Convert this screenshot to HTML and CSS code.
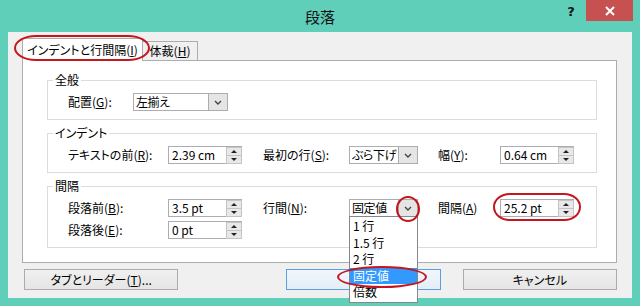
FILE: index.html
```html
<!DOCTYPE html>
<html lang="ja">
<head>
    <meta charset="UTF-8">
    <title>段落</title>
    <link rel="stylesheet" href="styles.css">
</head>
<body>
    <div class="window">
        <div class="titlebar">
            <span class="title">段落</span>
            <div class="controls">
                <span class="help">?</span>
                <span class="close">
                    <svg width="10" height="10" viewBox="0 0 10 10"><path d="M1 1 L9 9 M9 1 L1 9" stroke="#fff" stroke-width="2" fill="none"/></svg>
                </span>
            </div>
        </div>

        <div class="client">
            <div class="tabs">
                <div class="tab active">インデントと行間隔(<u>I</u>)<span class="mark mark-tab"></span></div>
                <div class="tab">体裁(<u>H</u>)</div>
            </div>

            <div class="panel">
                <fieldset class="group">
                    <legend>全般</legend>
                    <div class="row-general">
                        <span class="label-short">配置(<u>G</u>):</span>
                        <div class="combo combo-wide">
                            <span class="value">左揃え</span>
                            <span class="drop"><svg width="8" height="5" viewBox="0 0 8 5"><path d="M1 1 L4 4 L7 1" stroke="#444" stroke-width="1.4" fill="none"/></svg></span>
                        </div>
                    </div>
                </fieldset>

                <fieldset class="group">
                    <legend>インデント</legend>
                    <div class="grid">
                        <span class="label">テキストの前(<u>R</u>):</span>
                        <div class="cell">
                            <div class="spin"><span class="value">2.39 cm</span><span class="spin-btn"><i class="up"></i><i class="down"></i></span></div>
                        </div>
                        <span class="label">最初の行(<u>S</u>):</span>
                        <div class="cell">
                            <div class="combo">
                                <span class="value">ぶら下げ</span>
                                <span class="drop"><svg width="8" height="5" viewBox="0 0 8 5"><path d="M1 1 L4 4 L7 1" stroke="#444" stroke-width="1.4" fill="none"/></svg></span>
                            </div>
                        </div>
                        <span class="label">幅(<u>Y</u>):</span>
                        <div class="cell">
                            <div class="spin"><span class="value">0.64 cm</span><span class="spin-btn"><i class="up"></i><i class="down"></i></span></div>
                        </div>
                    </div>
                </fieldset>

                <fieldset class="group">
                    <legend>間隔</legend>
                    <div class="grid">
                        <span class="label">段落前(<u>B</u>):</span>
                        <div class="cell">
                            <div class="spin"><span class="value">3.5 pt</span><span class="spin-btn"><i class="up"></i><i class="down"></i></span></div>
                        </div>
                        <span class="label">行間(<u>N</u>):</span>
                        <div class="cell">
                            <div class="combo combo-open">
                                <span class="value">固定値</span>
                                <span class="drop"><svg width="8" height="5" viewBox="0 0 8 5"><path d="M1 1 L4 4 L7 1" stroke="#444" stroke-width="1.4" fill="none"/></svg><span class="mark mark-drop"></span></span>
                                <ul class="list">
                                    <li>1 行</li>
                                    <li>1.5 行</li>
                                    <li>2 行</li>
                                    <li class="selected">固定値<span class="mark mark-item"></span></li>
                                    <li>倍数</li>
                                </ul>
                            </div>
                        </div>
                        <span class="label">間隔(<u>A</u>)</span>
                        <div class="cell">
                            <div class="spin"><span class="value">25.2 pt</span><span class="spin-btn"><i class="up"></i><i class="down"></i></span><span class="mark mark-spin"></span></div>
                        </div>

                        <span class="label">段落後(<u>E</u>):</span>
                        <div class="cell">
                            <div class="spin"><span class="value">0 pt</span><span class="spin-btn"><i class="up"></i><i class="down"></i></span></div>
                        </div>
                    </div>
                </fieldset>
            </div>

            <div class="buttons">
                <button class="btn">タブとリーダー(<u>T</u>)...</button>
                <!-- OK button: its caption is hidden under the open list -->
                <button class="btn default"></button>
                <button class="btn">キャンセル</button>
            </div>
        </div>
    </div>
</body>
</html>
```

FILE: styles.css
```css
* {
    margin: 0;
    padding: 0;
    box-sizing: border-box;
}

body {
    background: #fff;
    font-family: "Noto Sans CJK JP", "Noto Sans", sans-serif;
    font-size: 12px;
    line-height: 16px;
    color: #000;
    font-feature-settings: "palt";
}

u {
    text-decoration: underline;
    text-underline-offset: 1px;
}

.window {
    width: 640px;
    height: 306px;
    background: #60cfba;
    display: flex;
    flex-direction: column;
    padding: 0 8px 8px;
}

/* title bar */
.titlebar {
    height: 32px;
    display: grid;
    grid-template-columns: 1fr auto 1fr;
}

.title {
    grid-column: 2;
    font-size: 15px;
    line-height: 34px;
    color: #111;
}

.controls {
    justify-self: end;
    align-self: start;
    display: flex;
    margin-right: -1px;
}

.help {
    width: 22px;
    height: 21px;
    margin-right: 4px;
    text-align: center;
    font-family: "DejaVu Sans", sans-serif;
    font-weight: bold;
    font-size: 13px;
    line-height: 24px;
    color: #111;
}

.close {
    width: 47px;
    height: 21px;
    background: #c75050;
    display: flex;
    align-items: center;
    justify-content: center;
}

/* client area */
.client {
    flex: 1;
    background: #f0f0f0;
    display: flex;
    flex-direction: column;
    padding: 6px 15px 8px 14px;
}

.tabs {
    display: flex;
    align-items: flex-end;
    height: 22px;
}

.tab {
    height: 19px;
    padding: 1px 0 0;
    text-align: center;
    width: 55px;
    border: 1px solid #adadad;
    border-left: none;
    border-bottom: none;
    background: #f0f0f0;
}

.tab.active {
    width: 121px;
    height: 23px;
    padding-top: 3px;
    margin-bottom: -1px;
    border-left: 1px solid #adadad;
    background: #fff;
    position: relative;
    z-index: 1;
}

.panel {
    flex: 1;
    background: #fff;
    border: 1px solid #adadad;
    padding: 11px 19px 14px 24px;
}

.group {
    border: 1px solid #dcdcdc;
    padding: 5px 0 8px 20px;
    min-width: 0;
}

.group + .group {
    margin-top: 5px;
}

.group legend {
    margin-left: -15px;
    padding: 0 2px;
    line-height: 16px;
}

.row-general {
    display: flex;
    align-items: center;
}

.label-short {
    width: 65px;
}

.grid {
    display: grid;
    grid-template-columns: 100px 95px 86px 89px 62px 74px;
    row-gap: 4px;
    align-items: center;
}

.cell {
    display: flex;
}

/* spin box */
.spin {
    position: relative;
    display: flex;
    width: 74px;
    height: 18px;
    border: 1px solid #abadb3;
    background: #fff;
}

.spin .value {
    flex: 1;
    padding-left: 3px;
    line-height: 16px;
}

.spin-btn {
    width: 16px;
    border: 1px solid #c4c4c4;
    background: #e8e8e8;
    display: flex;
    flex-direction: column;
    margin: 0 -1px -1px 0;
}

.spin-btn i {
    flex: 1;
    display: flex;
    align-items: center;
    justify-content: center;
}

.spin-btn i + i {
    border-top: 1px solid #c4c4c4;
}

.spin-btn i::before {
    content: "";
    border-left: 3px solid transparent;
    border-right: 3px solid transparent;
}

.spin-btn .up::before {
    border-bottom: 3px solid #222;
}

.spin-btn .down::before {
    border-top: 3px solid #222;
}

/* combo box */
.combo {
    position: relative;
    display: flex;
    width: 69px;
    height: 18px;
    border: 1px solid #abadb3;
    background: #fff;
}

.combo-wide {
    width: 95px;
}

.combo .value {
    flex: 1;
    min-width: 0;
    padding-left: 2px;
    line-height: 16px;
    white-space: nowrap;
    overflow: hidden;
    letter-spacing: -0.4px;
}

.drop {
    position: relative;
    flex: none;
    width: 19px;
    border-left: 1px solid #acacac;
    background: #e5e5e5;
    display: flex;
    align-items: center;
    justify-content: center;
}

.list {
    position: absolute;
    top: 100%;
    left: -1px;
    right: -1px;
    z-index: 5;
    list-style: none;
    background: #fff;
    border: 1px solid #828790;
    padding: 1px 0 1px;
}

.list li {
    position: relative;
    height: 16.5px;
    line-height: 16px;
    padding-left: 3px;
}

.list li.selected {
    background: #3399ff;
    color: #fff;
}

/* red annotation marks */
.mark {
    position: absolute;
    border: 2px solid #c5161d;
    border-radius: 50%;
    pointer-events: none;
    z-index: 6;
}

.mark-tab {
    top: -4px;
    bottom: 0;
    left: -9px;
    right: -8px;
    border-radius: 22px / 13px;
}

.mark-drop {
    top: -4px;
    bottom: -6px;
    left: -3px;
    right: -3px;
}

.mark-spin {
    top: -7px;
    bottom: -5px;
    left: -8px;
    right: -8px;
    border-radius: 18px / 15px;
}

.mark-item {
    top: -2px;
    bottom: -4px;
    left: -13px;
    right: -10px;
}

/* bottom buttons */
.buttons {
    display: flex;
    margin-top: 6px;
    padding-left: 2px;
}

.btn {
    width: 155px;
    height: 21px;
    border: 1px solid #acacac;
    background: linear-gradient(#f0f0f0, #e5e5e5);
    font-family: inherit;
    font-size: 12px;
    font-feature-settings: "palt";
    color: #000;
}

.btn + .btn {
    margin-left: 22px;
}

.btn.default {
    margin-left: 108px;
    border-color: #5b9fe3;
    background: linear-gradient(#f2f7fc, #e3eef9);
}
```
